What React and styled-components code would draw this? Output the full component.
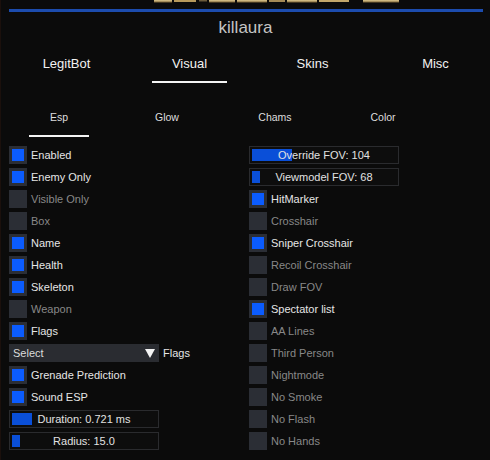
import React from "react";
import styled, { createGlobalStyle } from "styled-components";

const Global = createGlobalStyle`
  html, body { margin: 0; padding: 0; background: #0b0b0b; }
  * { box-sizing: border-box; }
`;

const Root = styled.div`
  width: 490px;
  height: 460px;
  overflow: hidden;
  background: #0b0b0b;
  border-left: 1px solid #1b100c;
  display: flex;
  flex-direction: column;
  font-family: "Liberation Sans", Arial, sans-serif;
`;

const LogoStrip = styled.svg`
  display: block;
  width: 490px;
  height: 4px;
  flex: none;
`;

const BlueLine = styled.div`
  height: 3px;
  margin: 5px 7px 0 8px;
  background: #1c4cae;
`;

const Title = styled.div`
  margin-top: 4px;
  height: 24px;
  line-height: 24px;
  text-align: center;
  font-size: 17px;
  color: #c4c4c4;
`;

const TabRow = styled.div`
  display: grid;
  grid-template-columns: repeat(4, ${(p) => p.$col}px);
  padding-left: ${(p) => p.$pad}px;
  margin-top: ${(p) => p.$top}px;
`;

const Tab = styled.div`
  display: flex;
  flex-direction: column;
  align-items: center;
  gap: ${(p) => p.$gap}px;
  font-size: ${(p) => p.$size}px;
  color: ${(p) => p.$color};
  line-height: ${(p) => p.$lh}px;
  &::after {
    content: "";
    width: ${(p) => p.$line}px;
    height: 2px;
    background: ${(p) => (p.$active ? "#f4f4f4" : "transparent")};
  }
`;

const Columns = styled.div`
  display: grid;
  grid-template-columns: 240px 1fr;
  padding-left: 8px;
  margin-top: 9px;
`;

const Column = styled.div`
  display: flex;
  flex-direction: column;
  gap: 4px;
`;

const Row = styled.div`
  display: flex;
  align-items: center;
  height: 18px;
  gap: 4px;
  font-size: 11px;
  color: ${(p) => (p.$on ? "#e6e6e6" : "#888888")};
  white-space: nowrap;
`;

const Box = styled.div`
  width: 18px;
  height: 18px;
  flex: none;
  background: #2b2e35;
  display: grid;
  place-items: center;
  &::after {
    content: "";
    width: 12px;
    height: 12px;
    background: ${(p) => (p.$on ? "#0b5cff" : "transparent")};
  }
`;

const Slider = styled.div`
  width: 150px;
  height: 18px;
  border: 1px solid #2a2b2e;
  background: #0d0d0d;
  display: grid;
  padding: 2px 2px;
  font-size: 11px;
  color: #e2e2e2;
`;

const Fill = styled.div`
  grid-area: 1 / 1;
  background: #0a4fd8;
  height: 100%;
`;

const SliderText = styled.div`
  grid-area: 1 / 1;
  text-align: center;
  line-height: 12px;
  white-space: nowrap;
`;

const Select = styled.div`
  width: 150px;
  height: 18px;
  background: #2a2c31;
  display: flex;
  align-items: center;
  justify-content: space-between;
  padding: 0 4px;
  color: #dcdcdc;
  font-size: 11px;
`;

const SelectRow = styled.div`
  display: flex;
  align-items: center;
  gap: 4px;
  height: 18px;
  font-size: 11px;
  color: #e6e6e6;
`;

const Check = ({ label, on }) => (
  <Row $on={on}>
    <Box $on={on} />
    <span>{label}</span>
  </Row>
);

const Slide = ({ label, fill }) => (
  <Slider>
    <Fill style={{ width: fill }} />
    <SliderText>{label}</SliderText>
  </Slider>
);

const tabs = ["LegitBot", "Visual", "Skins", "Misc"];
const subs = ["Esp", "Glow", "Chams", "Color"];

export default function App() {
  return (
    <Root>
      <Global />
      <LogoStrip viewBox="0 0 490 4">
        <defs>
          <linearGradient id="gold" x1="0" y1="0" x2="0" y2="1">
            <stop offset="0" stopColor="#e2cc92" />
            <stop offset="1" stopColor="#7d6536" />
          </linearGradient>
        </defs>
        <rect x="153" y="0" width="18" height="2.5" fill="url(#gold)" />
        <rect x="173" y="0" width="22" height="2" fill="#b79a5c" />
        <rect x="198" y="0" width="8" height="1.5" fill="#6b5a3a" />
        <rect x="208" y="0" width="26" height="2.5" fill="url(#gold)" />
        <rect x="236" y="0" width="30" height="2.5" fill="url(#gold)" />
        <rect x="268" y="0" width="16" height="2" fill="#a58a55" />
        <rect x="286" y="0" width="30" height="2.5" fill="url(#gold)" />
        <rect x="318" y="0" width="30" height="2" fill="#c2a76b" />
        <rect x="362" y="0" width="36" height="2.5" fill="url(#gold)" />
      </LogoStrip>
      <BlueLine />
      <Title>killaura</Title>
      <TabRow $col={123} $pad={4} $top={16}>
        {tabs.map((t) => (
          <Tab key={t} $active={t === "Visual"} $gap={9} $size={13} $lh={16} $line={75} $color="#f2f2f2">
            {t}
          </Tab>
        ))}
      </TabRow>
      <TabRow $col={108} $pad={4} $top={27}>
        {subs.map((t) => (
          <Tab key={t} $active={t === "Esp"} $gap={11} $size={10.5} $lh={14} $line={60} $color="#dedede">
            {t}
          </Tab>
        ))}
      </TabRow>
      <Columns>
        <Column>
          <Check label="Enabled" on />
          <Check label="Enemy Only" on />
          <Check label="Visible Only" />
          <Check label="Box" />
          <Check label="Name" on />
          <Check label="Health" on />
          <Check label="Skeleton" on />
          <Check label="Weapon" />
          <Check label="Flags" on />
          <SelectRow>
            <Select>
              <span>Select</span>
              <svg width="10" height="9" viewBox="0 0 10 9">
                <polygon points="0,0 10,0 5,9" fill="#f4f4f4" />
              </svg>
            </Select>
            <span>Flags</span>
          </SelectRow>
          <Check label="Grenade Prediction" on />
          <Check label="Sound ESP" on />
          <Slide label="Duration: 0.721 ms" fill={20} />
          <Slide label="Radius: 15.0" fill={8} />
        </Column>
        <Column>
          <Slide label="Override FOV: 104" fill={40} />
          <Slide label="Viewmodel FOV: 68" fill={8} />
          <Check label="HitMarker" on />
          <Check label="Crosshair" />
          <Check label="Sniper Crosshair" on />
          <Check label="Recoil Crosshair" />
          <Check label="Draw FOV" />
          <Check label="Spectator list" on />
          <Check label="AA Lines" />
          <Check label="Third Person" />
          <Check label="Nightmode" />
          <Check label="No Smoke" />
          <Check label="No Flash" />
          <Check label="No Hands" />
        </Column>
      </Columns>
    </Root>
  );
}
